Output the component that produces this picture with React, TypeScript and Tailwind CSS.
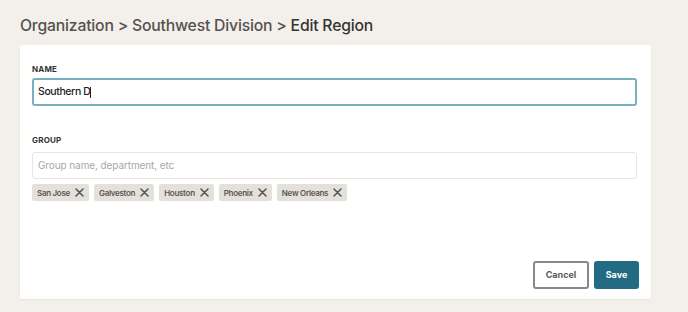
const groups = ['San Jose', 'Galveston', 'Houston', 'Phoenix', 'New Orleans'];

const CloseIcon = () => (
  <svg width="9" height="9" viewBox="0 0 9 9" className="text-[#555250]">
    <path d="M1 1L8 8M8 1L1 8" stroke="currentColor" strokeWidth="1.5" strokeLinecap="round" />
  </svg>
);

const EditRegionPage = () => {
  return (
    <div className="min-h-[312px] w-[688px] bg-[#f3efea] font-['Inter',sans-serif] overflow-hidden">
      {/* Breadcrumb */}
      <h1 className="pl-[20px] pt-[14px] h-[45px] text-[15.75px] font-medium text-[#555250] tracking-[-0.2px]">
        Organization &gt; Southwest Division &gt; <span className="text-[#363432]">Edit Region</span>
      </h1>

      {/* Form card */}
      <div className="ml-[20px] w-[631px] h-[254px] bg-white rounded-[2px] shadow-[0_1px_2px_rgba(0,0,0,0.06)] px-[12px] pt-[19px] pb-[10px] flex flex-col">
        <label className="text-[8px] font-bold text-[#333] tracking-[0.2px] leading-[10px]">NAME</label>
        <div className="mt-[4px] h-[28px] w-[605px] border-2 border-[#79b0bf] rounded-[3px] flex items-center px-[4px]">
          <span className="text-[10.5px] text-[#222] font-medium tracking-[-0.4px]">Southern D</span>
          <span className="w-px h-[11px] bg-[#222]" />
        </div>

        <label className="mt-[29px] text-[8px] font-bold text-[#333] tracking-[0.2px] leading-[10px]">GROUP</label>
        <div className="mt-[7px] h-[27px] w-[605px] border border-[#e8e6e3] rounded-[3px] flex items-center px-[5px]">
          <span className="text-[10px] text-[#aaa7a4] tracking-[-0.1px]">Group name, department, etc</span>
        </div>

        <div className="mt-[5px] flex gap-[5px]">
          {groups.map(group => (
            <div
              key={group}
              className="h-[17px] bg-[#e4e1dd] rounded-[2px] flex items-center px-[5px] gap-[5px]"
            >
              <span className="text-[8px] font-semibold text-[#5a5754] tracking-[-0.3px]">{group}</span>
              <CloseIcon />
            </div>
          ))}
        </div>

        <div className="mt-auto flex justify-end gap-[5px]">
          <button className="h-[28px] w-[56px] border-2 border-[#8a8886] rounded-[3px] bg-white text-[9px] font-bold text-[#5c5a58]">
            Cancel
          </button>
          <button className="h-[28px] w-[45px] rounded-[3px] bg-[#236b82] text-[9px] font-bold text-white">
            Save
          </button>
        </div>
      </div>
    </div>
  );
};

export default function App() {
  return <EditRegionPage />;
}
